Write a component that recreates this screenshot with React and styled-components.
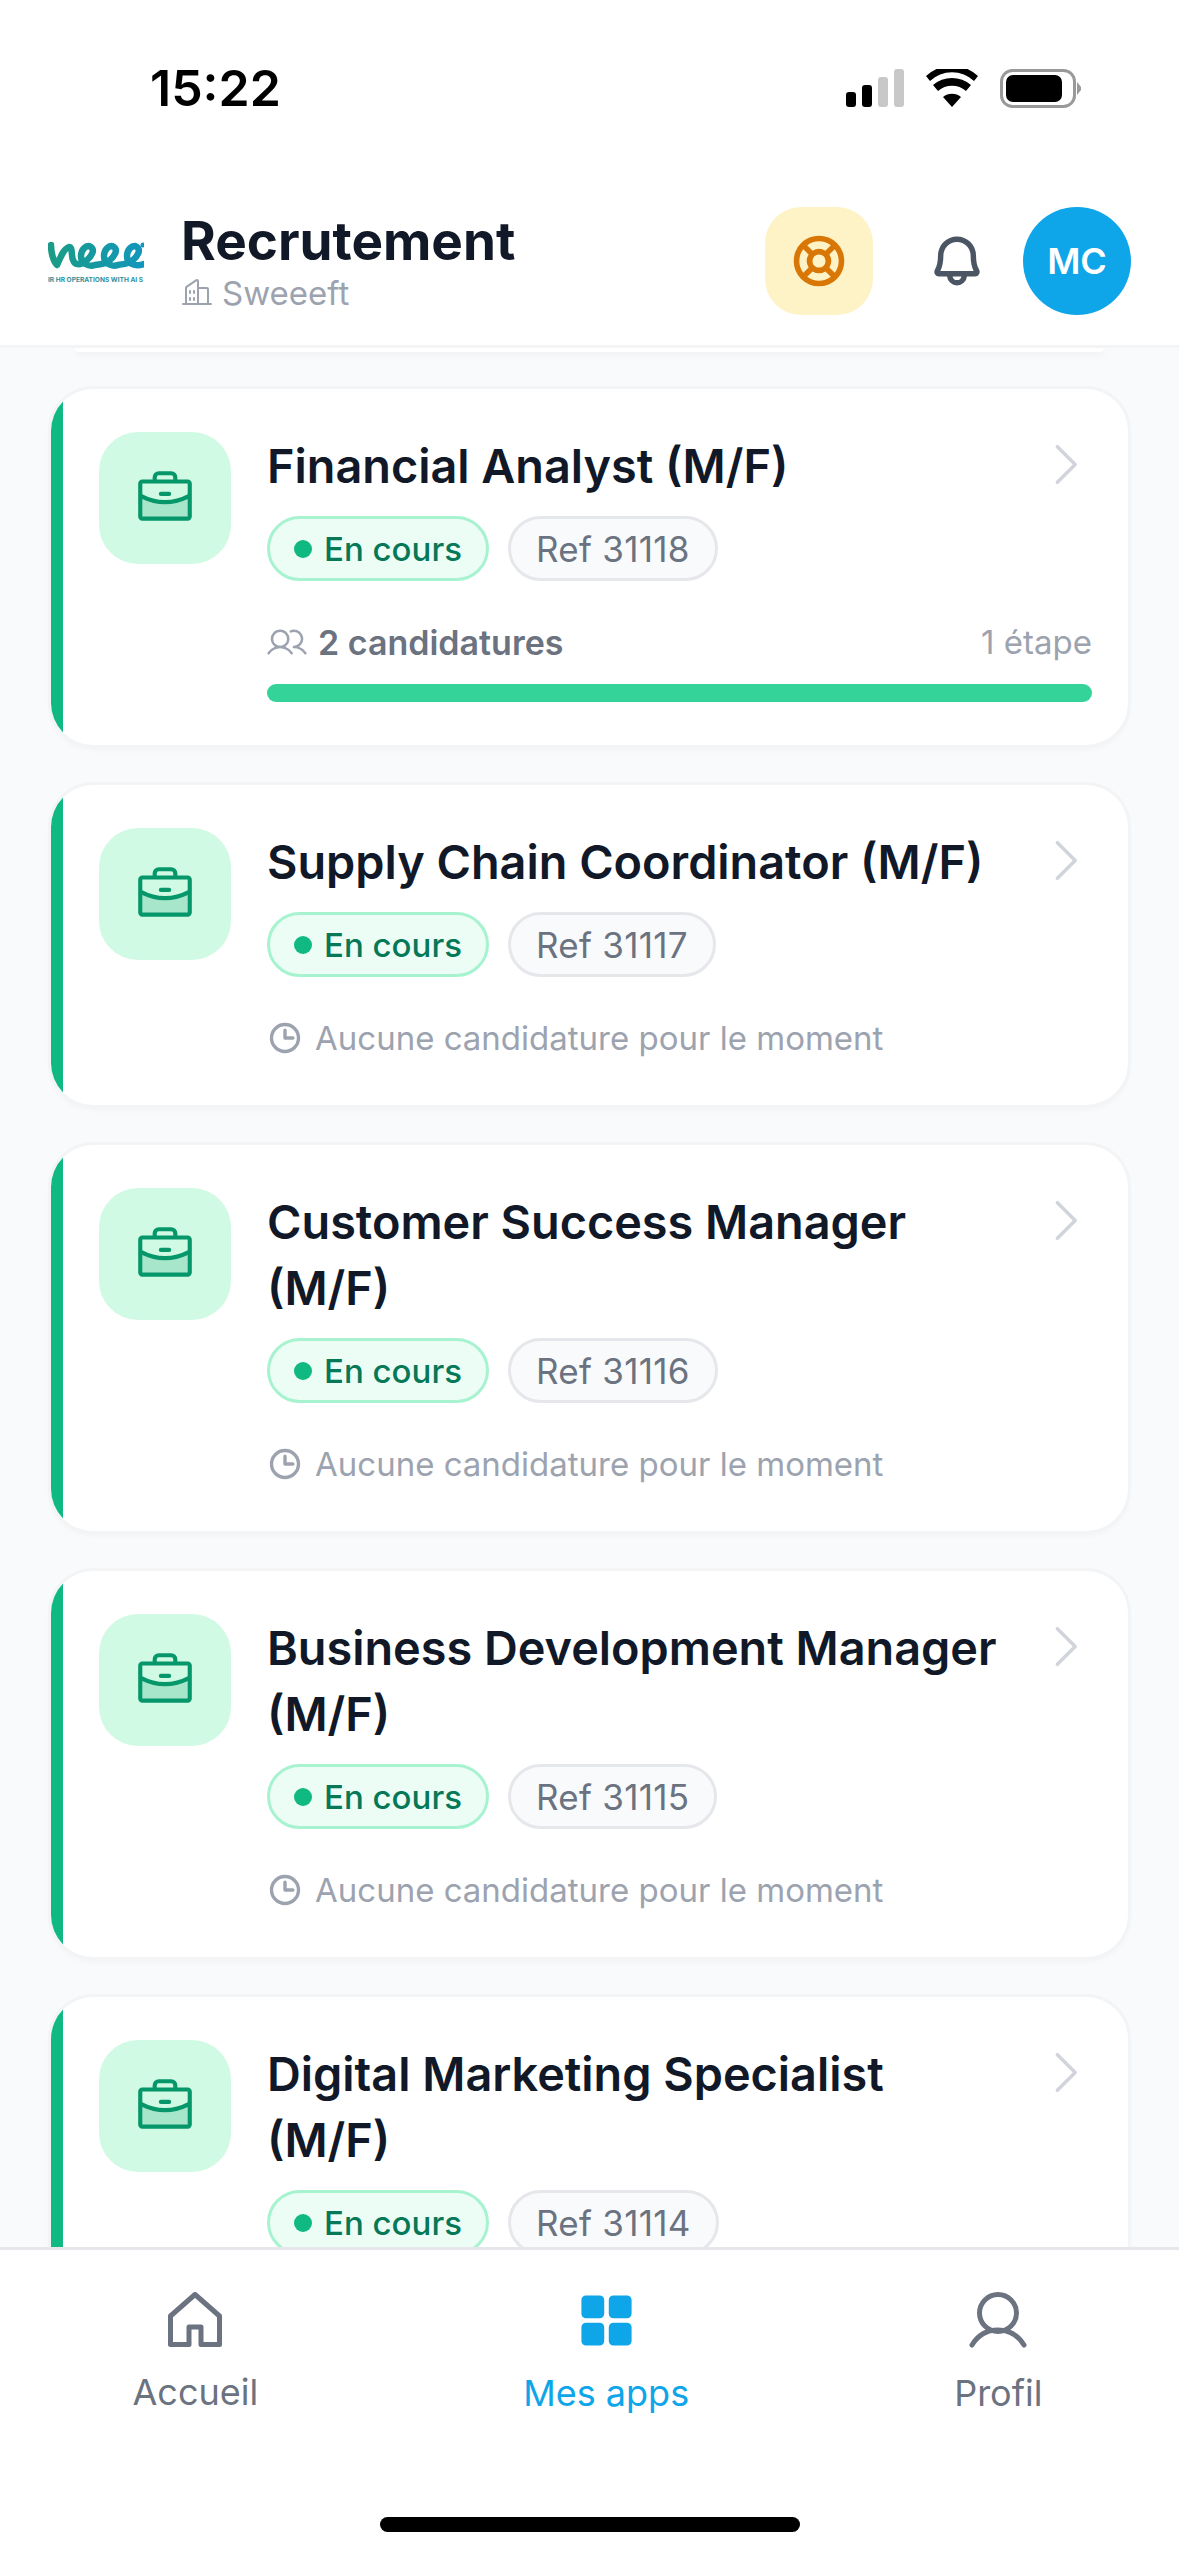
import React from "react";
import styled, { createGlobalStyle } from "styled-components";
import {
  PiBellBold,
  PiBriefcaseDuotone,
  PiBuildings,
  PiCaretRight,
  PiClockBold,
  PiLifebuoyBold,
  PiSquaresFourFill,
  PiUsers,
} from "react-icons/pi";

const GlobalStyle = createGlobalStyle`
  html, body {
    margin: 0;
    padding: 0;
    background: #ffffff;
  }
  * {
    box-sizing: border-box;
  }
`;

const Screen = styled.div`
  width: 1179px;
  height: 2556px;
  display: flex;
  flex-direction: column;
  overflow: hidden;
  background: #f9fafb;
  font-family: Inter, "Noto Sans", sans-serif;
`;

const StatusBar = styled.div`
  height: 180px;
  padding: 62px 98px 0 150px;
  display: flex;
  justify-content: space-between;
  align-items: flex-start;
`;

const Time = styled.span`
  font-size: 50px;
  line-height: 52px;
  font-weight: 600;
  color: #000000;
`;

const StatusIcons = styled.div`
  display: flex;
  align-items: center;
  gap: 22px;
  height: 52px;
`;

const Header = styled.header`
  background: #ffffff;
  border-bottom: 3px solid #f3f4f6;
  flex-shrink: 0;
`;

const HeaderRow = styled.div`
  height: 165px;
  padding: 27px 48px 30px 48px;
  display: flex;
  align-items: center;
`;

const Logo = styled.div`
  width: 96px;
  margin-right: 38px;
  overflow: hidden;
  display: flex;
  flex-direction: column;
  gap: 6px;
`;

const Tagline = styled.span`
  font-size: 6.6px;
  line-height: 10px;
  font-weight: 700;
  white-space: nowrap;
  color: #2f8f9d;
`;

const HeaderText = styled.div`
  flex: 1;
  display: flex;
  flex-direction: column;
  margin: 1px 0 0 -1px;
`;

const PageTitle = styled.h1`
  margin: 0;
  font-size: 53px;
  line-height: 62px;
  font-weight: 700;
  color: #111827;
`;

const Company = styled.div`
  display: flex;
  align-items: center;
  gap: 9px;
  font-size: 33px;
  line-height: 42px;
  color: #9ca3af;
`;

const HelpButton = styled.div`
  width: 108px;
  height: 108px;
  border-radius: 36px;
  background: #fef3c7;
  color: #d97706;
  display: flex;
  align-items: center;
  justify-content: center;
`;

const BellButton = styled.div`
  width: 150px;
  padding-left: 18px;
  display: flex;
  justify-content: center;
  color: #4b5563;
`;

const Avatar = styled.div`
  width: 108px;
  height: 108px;
  border-radius: 50%;
  background: #0ea5e9;
  color: #ffffff;
  font-size: 36px;
  font-weight: 600;
  display: flex;
  align-items: center;
  justify-content: center;
`;

const List = styled.main`
  flex: 1;
  min-height: 0;
  overflow: hidden;
  padding: 0 51px;
  display: flex;
  flex-direction: column;
  gap: 40px;
`;

const CardTail = styled.div`
  height: 4px;
  flex-shrink: 0;
  margin: 0 24px -3px;
  background: #ffffff;
  border-radius: 0 0 30px 30px;
  box-shadow: 0 3px 6px rgba(0, 0, 0, 0.05);
`;

const Card = styled.article`
  position: relative;
  flex-shrink: 0;
  display: flex;
  gap: 36px;
  padding: 43px 36px 43px 48px;
  background: #ffffff;
  border-radius: 42px;
  box-shadow: 0 0 0 3px #f3f4f6, 0 4px 7px rgba(0, 0, 0, 0.04);
`;

const CardStripe = styled.span`
  position: absolute;
  top: 0;
  bottom: 0;
  left: 0;
  width: 12px;
  overflow: hidden;
  &::before {
    content: "";
    position: absolute;
    top: 0;
    bottom: 0;
    left: 0;
    width: 84px;
    border-radius: 42px;
    background: #10b981;
  }
`;

const IconBox = styled.div`
  width: 132px;
  height: 132px;
  flex-shrink: 0;
  border-radius: 39px;
  background: #d1fae5;
  color: #059669;
  display: flex;
  align-items: center;
  justify-content: center;
`;

const CardBody = styled.div`
  flex: 1;
  min-width: 0;
  padding-top: 1px;
`;

const TitleRow = styled.div`
  display: flex;
  justify-content: space-between;
  gap: 36px;
`;

const JobTitle = styled.h2`
  margin: 0;
  font-size: 46.8px;
  line-height: 66px;
  font-weight: 600;
  color: #111827;
`;

const Chevron = styled(PiCaretRight)`
  flex-shrink: 0;
  margin: 3px -1px 0 0;
  color: #d1d5db;
`;

const Chips = styled.div`
  display: flex;
  gap: 19px;
  margin-top: 17px;
`;

const Chip = styled.span`
  height: 65px;
  padding: 0 ${(p) => (p.$status ? "24px" : "25px")};
  display: inline-flex;
  align-items: center;
  gap: 12px;
  border-radius: 33px;
  border: 3px solid ${(p) => (p.$status ? "#a7f3d0" : "#e5e7eb")};
  background: ${(p) => (p.$status ? "#ecfdf5" : "#f9fafb")};
  color: ${(p) => (p.$status ? "#047857" : "#6b7280")};
  font-size: ${(p) => (p.$status ? "33px" : "35px")};
  font-weight: ${(p) => (p.$status ? 500 : 400)};
  letter-spacing: ${(p) => (p.$status ? "0" : "0.3px")};
`;

const Dot = styled.span`
  width: 18px;
  height: 18px;
  border-radius: 50%;
  background: #10b981;
`;

const MetaRow = styled.div`
  height: 48px;
  margin-top: 37px;
  display: flex;
  align-items: center;
  justify-content: space-between;
`;

const Candidates = styled.span`
  display: flex;
  align-items: center;
  gap: 11px;
  font-size: 34px;
  font-weight: 600;
  color: #6b7280;
  svg {
    color: #9ca3af;
  }
`;

const Empty = styled.span`
  display: flex;
  align-items: center;
  gap: 12px;
  font-size: 33px;
  color: #9ca3af;
`;

const Steps = styled.span`
  font-size: 33px;
  color: #9ca3af;
`;

const Progress = styled.div`
  height: 18px;
  margin-top: 18px;
  border-radius: 9px;
  background: #34d399;
`;

const TabBar = styled.nav`
  flex-shrink: 0;
  height: 309px;
  background: #ffffff;
  border-top: 3px solid #e5e7eb;
  display: flex;
  flex-direction: column;
`;

const Tabs = styled.div`
  height: 162px;
  padding: 42px 4px 0 0;
  display: flex;
  justify-content: space-around;
`;

const Tab = styled.div`
  display: flex;
  flex-direction: column;
  align-items: center;
  gap: 21px;
  color: ${(p) => (p.$active ? "#0ea5e9" : "#6b7280")};
  font-size: 36px;
  line-height: 48px;
  font-weight: 400;
`;

const TabIcon = styled.div`
  height: 56px;
  display: flex;
  align-items: center;
  justify-content: center;
`;

const HomeBar = styled.div`
  width: 420px;
  height: 15px;
  margin: 105px auto 0;
  border-radius: 8px;
  background: #000000;
`;

const jobs = [
  { title: "Financial Analyst (M/F)", ref: "31118", candidates: 2, steps: 1 },
  { title: "Supply Chain Coordinator (M/F)", ref: "31117" },
  { title: "Customer Success Manager (M/F)", ref: "31116" },
  { title: "Business Development Manager (M/F)", ref: "31115" },
  { title: "Digital Marketing Specialist (M/F)", ref: "31114" },
];

const SignalIcon = () => (
  <svg width="58" height="38" viewBox="0 0 58 38">
    <rect x="0" y="23" width="10" height="15" rx="3" fill="#000" />
    <rect x="16" y="16" width="10" height="22" rx="3" fill="#000" />
    <rect x="32" y="8" width="10" height="30" rx="3" fill="#c8c8c8" />
    <rect x="48" y="0" width="10" height="38" rx="3" fill="#c8c8c8" />
  </svg>
);

const WifiIcon = () => (
  <svg width="52" height="38" viewBox="0 0 52 38">
    <path
      d="M26 38 L17 28 A14 14 0 0 1 35 28 Z M12 22 L7 16 A29 29 0 0 1 45 16 L40 22 A21 21 0 0 0 12 22 Z M4 12 L0 7 A38 38 0 0 1 52 7 L48 12 A32 32 0 0 0 4 12 Z"
      fill="#000"
    />
  </svg>
);

const BatteryIcon = () => (
  <svg width="81" height="39" viewBox="0 0 81 39">
    <rect x="1.5" y="1.5" width="73" height="36" rx="11" fill="none" stroke="#999" strokeWidth="3" />
    <rect x="6" y="6" width="56" height="27" rx="7" fill="#000" />
    <path d="M77 13 L81 18 L81 21 L77 26 Z" fill="#999" />
  </svg>
);

const LogoMark = () => (
  <svg width="96" height="32" viewBox="0 0 96 32">
    <defs>
      <linearGradient id="logoGradient" gradientUnits="userSpaceOnUse" x1="0" x2="96" y1="0" y2="0">
        <stop offset="0" stopColor="#1a9c84" />
        <stop offset="1" stopColor="#1296bd" />
      </linearGradient>
    </defs>
    <path
      d="M3 8 C3 15 5 24 9 28 C12 22 15 12 21 10 C25 10 23 19 25 23 C27 29 33 28 38 24 C44 19 47 13 43 10 C38 7 33 13 33 19 C33 27 41 30 47 28 C53 27 58 27 61 24 C67 19 70 13 66 10 C61 7 56 13 56 19 C56 27 64 30 70 28 C75 27 81 27 84 24 C90 19 93 13 89 10 C84 7 79 13 79 19 C79 27 87 30 96 27"
      fill="none"
      stroke="url(#logoGradient)"
      strokeWidth="6.5"
      strokeLinecap="round"
      strokeLinejoin="round"
    />
    <circle cx="95" cy="8" r="2.5" fill="#1296bd" />
  </svg>
);

const HomeIcon = () => (
  <svg width="54" height="55" viewBox="0 0 54 55" fill="none">
    <path
      d="M27 2.5 L51.5 24 V52.5 H33 V35 H21 V52.5 H2.5 V24 Z"
      stroke="currentColor"
      strokeWidth="5"
      strokeLinejoin="round"
    />
  </svg>
);

const UserIcon = () => (
  <svg width="60" height="56" viewBox="0 0 60 56" fill="none">
    <circle cx="30" cy="21" r="18.5" stroke="currentColor" strokeWidth="5" />
    <path
      d="M4 53 C10 43 19 38 30 38 C41 38 50 43 56 53"
      stroke="currentColor"
      strokeWidth="5"
      strokeLinecap="round"
    />
  </svg>
);

const JobCard = ({ job }) => (
  <Card>
    <CardStripe />
    <IconBox>
      <PiBriefcaseDuotone size={66} />
    </IconBox>
    <CardBody>
      <TitleRow>
        <JobTitle>{job.title}</JobTitle>
        <Chevron size={57} />
      </TitleRow>
      <Chips>
        <Chip $status>
          <Dot />
          En cours
        </Chip>
        <Chip>Ref {job.ref}</Chip>
      </Chips>
      {job.candidates ? (
        <>
          <MetaRow>
            <Candidates>
              <PiUsers size={40} />
              {job.candidates} candidatures
            </Candidates>
            <Steps>{job.steps} étape</Steps>
          </MetaRow>
          <Progress />
        </>
      ) : (
        <MetaRow>
          <Empty>
            <PiClockBold size={36} />
            Aucune candidature pour le moment
          </Empty>
        </MetaRow>
      )}
    </CardBody>
  </Card>
);

const App = () => {
  return (
    <Screen>
      <GlobalStyle />
      <Header>
        <StatusBar>
          <Time>15:22</Time>
          <StatusIcons>
            <SignalIcon />
            <WifiIcon />
            <BatteryIcon />
          </StatusIcons>
        </StatusBar>
        <HeaderRow>
          <Logo>
            <LogoMark />
            <Tagline>IR HR OPERATIONS WITH AI S</Tagline>
          </Logo>
          <HeaderText>
            <PageTitle>Recrutement</PageTitle>
            <Company>
              <PiBuildings size={32} />
              Sweeeft
            </Company>
          </HeaderText>
          <HelpButton>
            <PiLifebuoyBold size={60} />
          </HelpButton>
          <BellButton>
            <PiBellBold size={58} />
          </BellButton>
          <Avatar>MC</Avatar>
        </HeaderRow>
      </Header>
      <List>
        <CardTail />
        {jobs.map((job) => (
          <JobCard key={job.ref} job={job} />
        ))}
      </List>
      <TabBar>
        <Tabs>
          <Tab>
            <TabIcon>
              <HomeIcon />
            </TabIcon>
            Accueil
          </Tab>
          <Tab $active>
            <TabIcon>
              <PiSquaresFourFill size={73} />
            </TabIcon>
            Mes apps
          </Tab>
          <Tab>
            <TabIcon>
              <UserIcon />
            </TabIcon>
            Profil
          </Tab>
        </Tabs>
        <HomeBar />
      </TabBar>
    </Screen>
  );
};

export default App;
